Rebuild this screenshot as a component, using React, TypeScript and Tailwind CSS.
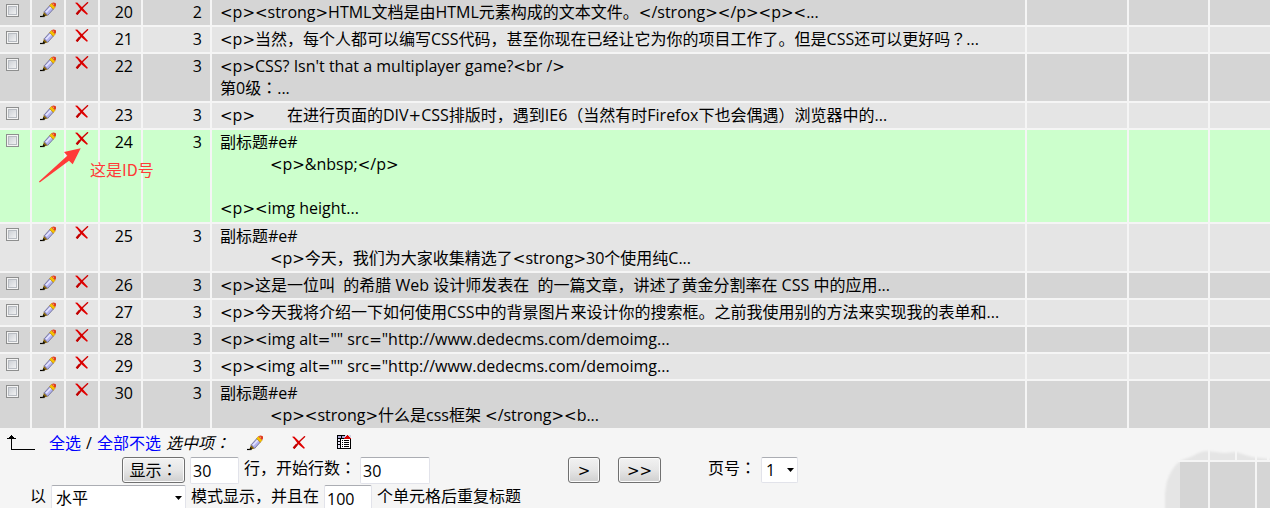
import type { ReactNode } from "react";

type Row = {
  id: number;
  type: number;
  body: string;
  marked?: boolean;
};

const INDENT = "            ";

const rows: Row[] = [
  { id: 20, type: 2, body: "<p><strong>HTML文档是由HTML元素构成的文本文件。</strong></p><p><..." },
  { id: 21, type: 3, body: "<p>当然，每个人都可以编写CSS代码，甚至你现在已经让它为你的项目工作了。但是CSS还可以更好吗？..." },
  { id: 22, type: 3, body: "<p>CSS? Isn't that a multiplayer game?<br />\n第0级：..." },
  { id: 23, type: 3, body: "<p>\u3000\u3000在进行页面的DIV+CSS排版时，遇到IE6（当然有时Firefox下也会偶遇）浏览器中的..." },
  { id: 24, type: 3, body: `副标题#e#\n${INDENT}<p>&nbsp;</p>\n\n<p><img height...`, marked: true },
  { id: 25, type: 3, body: `副标题#e#\n${INDENT}<p>今天，我们为大家收集精选了<strong>30个使用纯C...` },
  { id: 26, type: 3, body: "<p>这是一位叫  的希腊 Web 设计师发表在  的一篇文章，讲述了黄金分割率在 CSS 中的应用..." },
  { id: 27, type: 3, body: "<p>今天我将介绍一下如何使用CSS中的背景图片来设计你的搜索框。之前我使用别的方法来实现我的表单和..." },
  { id: 28, type: 3, body: '<p><img alt="" src="http://www.dedecms.com/demoimg...' },
  { id: 29, type: 3, body: '<p><img alt="" src="http://www.dedecms.com/demoimg...' },
  { id: 30, type: 3, body: `副标题#e#\n${INDENT}<p><strong>什么是css框架 </strong><b...` },
];

const cell = "border-b-2 border-r-2 border-[#f5f5f5] p-0 align-top";
const field = "border border-[#e2e3ea] border-t-[#abadb3] rounded-xs bg-white";
const button =
  "h-[26px] rounded-[3px] border border-[#707070] bg-linear-to-b from-[#f2f2f2] via-[#e6e6e6] to-[#cfcfcf] shadow-[inset_0_0_0_1px_#fbfbfb]";

// Wide math signs and centred full-width punctuation
function Mixed({ text }: { text: string }) {
  return text.split(/([<>=+]+|[：？])/).map((part, i) => {
    if (/^[<>=+]/.test(part)) {
      return <span key={i} className="font-['DejaVu_Sans',sans-serif] text-[15px] leading-none">{part}</span>;
    }
    if (/^[：？]/.test(part)) {
      return <span key={i} className="font-['Noto_Sans_CJK_JP',sans-serif] leading-none">{part}</span>;
    }
    return part;
  });
}

function PencilIcon() {
  return (
    <svg width="16" height="16" viewBox="0 0 16 16" aria-hidden="true">
      <path d="M0 14.500h4.500" stroke="#000" strokeWidth="1.200" />
      <path d="M2.600 14.800l1.300-5 3.800 3.800z" fill="#8a6508" />
      <path d="M2.200 15l1.200-3 2 2z" fill="#111" />
      <path d="M4.200 9.800l5.700-6.300 3.500 3.500-5.700 6.300z" fill="#b4b4f0" stroke="#6c6c94" strokeWidth=".9" />
      <path d="M6 10.200l5-5.300" stroke="#e6e6ff" strokeWidth="1.500" />
      <path d="M9.500 3.500l2-2.200 3.800 3.800-2 2.300z" fill="#f6c100" stroke="#a87400" strokeWidth=".4" />
      <path d="M11.500 1.400Q13.300-.2 15.300 1T15.100 5z" fill="#df3a1c" />
      <path d="M12.600 1.700l1.500.9" stroke="#ffa080" />
    </svg>
  );
}

function DeleteIcon() {
  return (
    <svg width="14" height="14" viewBox="0 0 14 14" aria-hidden="true">
      <path d="M0 .8L2.200.4 6.800 5l6.200 7-1.200.8L6 8 2.500 3.200z" fill="#e00000" />
      <path d="M13 .3L8 5 4.300 9.500 2 12.500" fill="none" stroke="#d00000" strokeWidth="1.400" />
      <path d="M5 8.300l-3.500 4" stroke="#c00000" strokeWidth="2.200" />
    </svg>
  );
}

function ExportIcon() {
  return (
    <svg width="15" height="15" viewBox="0 0 15 15" shapeRendering="crispEdges" aria-hidden="true">
      <path d="M0 0h14v14H0z" fill="#000" />
      <path d="M1 1h3v2H1zM5 1h3v2H5z" fill="#a9a9d8" />
      <path d="M1 4h2v2H1zM1 7h2v2H1zM1 10h2v3H1z" fill="#e8e8f8" />
      <path d="M4 4h9v9H4z" fill="#fff" />
      <path d="M5 5h1v1H5zM7 5h5v1H7zM5 7h1v1H5zM7 7h5v1H7zM5 9h1v1H5zM7 9h5v1H7zM5 11h1v1H5zM7 11h5v1H7z" fill="#000" />
      <path d="M8 0h6v3H8z" fill="#d4d4e4" />
      <path d="M10 0h1v1h1v1h1v1h1v1H7V3h1V2h1V1h1z" fill="#d80000" />
    </svg>
  );
}

function SelectAllArrow() {
  return (
    <svg width="28" height="16" viewBox="0 0 28 16" shapeRendering="crispEdges" aria-hidden="true">
      <path d="M4 0h1v1h1v1h1v1h2v1H5v10h23v1H4V4H0V3h2V2h1V1h1z" fill="#000" />
    </svg>
  );
}

function CheckBox({ label }: { label: string }) {
  return (
    <input
      type="checkbox"
      aria-label={label}
      className="block size-[13px] appearance-none border border-[#8e8f8f] bg-linear-to-br from-[#c4c8ce] to-[#fafafa] shadow-[inset_0_0_0_1px_#f4f4f4,inset_0_0_0_2px_#b8bcc2]"
    />
  );
}

function Select({ id, className, children }: { id: string; className: string; children: ReactNode }) {
  return (
    <span className="relative inline-flex">
      <select id={id} className={`${field} h-[26px] appearance-none pl-1 ${className}`}>
        {children}
      </select>
      <svg className="pointer-events-none absolute right-1 top-[11px]" width="7" height="4" viewBox="0 0 7 4" aria-hidden="true">
        <path d="M0 0h7L3.500 4z" fill="#000" />
      </svg>
    </span>
  );
}

// Note drawn over the marked row, pointing at its delete icon
function Annotation() {
  return (
    <div className="pointer-events-none absolute -left-7 top-4 z-10 flex items-start whitespace-nowrap">
      <svg className="shrink-0" width="44" height="38" viewBox="0 0 44 38" aria-hidden="true">
        <path d="M42.700 2.300L26 6l3.300 3.800L1 35.500l.7 1L31 14.800l3.700 3.400z" fill="#ff3b38" />
      </svg>
      <span className="ml-2 mt-3 font-['Noto_Sans_CJK_SC',sans-serif] text-[#ff3b38]">这是ID号</span>
    </div>
  );
}

// Torn corner at the bottom right of the page
function Corner() {
  return (
    <svg className="pointer-events-none absolute bottom-0 right-0" width="108" height="60" viewBox="0 0 108 60" aria-hidden="true">
      <defs>
        <filter id="soft">
          <feGaussianBlur stdDeviation="1" />
        </filter>
      </defs>
      <path d="M3 62V46q1-14 6-22 4-8 11-12l11-4q7-5 15-5l16 2 12-1 16 5 18 2v51z" fill="#e5e5e5" filter="url(#soft)" />
      <path d="M18 14h92v48H18z" fill="#d5d5d5" />
      <path d="M16 12h92v2H16zM46 0h2v60h-2zM93 13h2v47h-2zM73 0h2v13h-2zM93 0h2v13h-2zM105 0h2v13h-2z" fill="#f5f5f5" />
    </svg>
  );
}

export default function App() {
  return (
    <div className="relative h-screen overflow-hidden bg-[#f5f5f5] font-['Open_Sans','Noto_Sans_CJK_SC',sans-serif] text-base leading-[22px] text-black">
      <table className="w-full table-fixed border-separate border-spacing-0">
        <colgroup>
          <col className="w-8" />
          <col className="w-[34px]" />
          <col className="w-[34px]" />
          <col className="w-[43px]" />
          <col className="w-[69px]" />
          <col />
          <col className="w-[102px]" />
          <col className="w-[81px]" />
          <col className="w-[60px]" />
        </colgroup>
        <tbody>
          {rows.map((row, i) => (
            <tr
              key={row.id}
              className={row.marked ? "h-[94px] bg-[#ccffcc]" : i % 2 === 0 ? "bg-[#d5d5d5]" : "bg-[#e5e5e5]"}
            >
              <td className={`${cell} pl-1.5 pt-1`}>
                <CheckBox label={`${row.id}`} />
              </td>
              <td className={`${cell} pl-2 pt-0.5`}>
                <button type="button" aria-label="编辑" className="block">
                  <PencilIcon />
                </button>
              </td>
              <td className={`${cell} relative pl-[9px] pt-0.5`}>
                <button type="button" aria-label="删除" className="block">
                  <DeleteIcon />
                </button>
                {row.marked && <Annotation />}
              </td>
              <td className={`${cell} pb-0.5 pr-2 pt-px text-right`}>{row.id}</td>
              <td className={`${cell} pb-0.5 pr-2 pt-px text-right`}>{row.type}</td>
              <td className={`${cell} whitespace-pre pb-0.5 pl-2 pt-px`}>
                <Mixed text={row.body} />
              </td>
              <td className={cell} />
              <td className={cell} />
              <td className="border-b-2 border-[#f5f5f5]" />
            </tr>
          ))}
        </tbody>
      </table>

      <div className="flex h-[25px] items-center pl-[7px]">
        <SelectAllArrow />
        <p className="ml-3.5 flex gap-[5px]">
          <a href="#all" className="text-[#0000ff]">全选</a>
          <span>/</span>
          <a href="#none" className="text-[#0000ff]">全部不选</a>
          <i><Mixed text="选中项：" /></i>
        </p>
        <button type="button" aria-label="编辑" className="ml-[17px]">
          <PencilIcon />
        </button>
        <button type="button" aria-label="删除" className="ml-[29px]">
          <DeleteIcon />
        </button>
        <button type="button" aria-label="导出" className="ml-[31px]">
          <ExportIcon />
        </button>
      </div>

      <form onSubmit={(e) => e.preventDefault()}>
        <div className="mt-0.5 flex h-7 items-start pl-[122px]">
          <button type="submit" className={`${button} w-[63px]`}>
            <Mixed text="显示：" />
          </button>
          <input aria-label="行" defaultValue="30" className={`${field} ml-[5px] h-[27px] w-[49px] px-0.5`} />
          <label htmlFor="start" className="ml-[5px]">
            <Mixed text="行，开始行数：" />
          </label>
          <input id="start" defaultValue="30" className={`${field} ml-1 h-[27px] w-[70px] px-0.5`} />
          <button type="button" className={`${button} ml-[138px] w-8`}>
            <Mixed text=">" />
          </button>
          <button type="button" className={`${button} ml-[18px] w-[43px]`}>
            <Mixed text=">>" />
          </button>
          <label htmlFor="page" className="ml-[47px] mr-[5px]">
            <Mixed text="页号：" />
          </label>
          <Select id="page" className="w-[37px]">
            <option>1</option>
          </Select>
        </div>
        <div className="flex items-start pl-[30px]">
          <label htmlFor="mode" className="mr-[5px]">以</label>
          <Select id="mode" className="w-[135px]">
            <option>水平</option>
          </Select>
          <label htmlFor="repeat" className="mx-[5px]">模式显示，并且在</label>
          <input id="repeat" defaultValue="100" className={`${field} h-[27px] w-12 px-0.5`} />
          <span className="ml-[5px]">个单元格后重复标题</span>
        </div>
      </form>

      <Corner />
    </div>
  );
}
